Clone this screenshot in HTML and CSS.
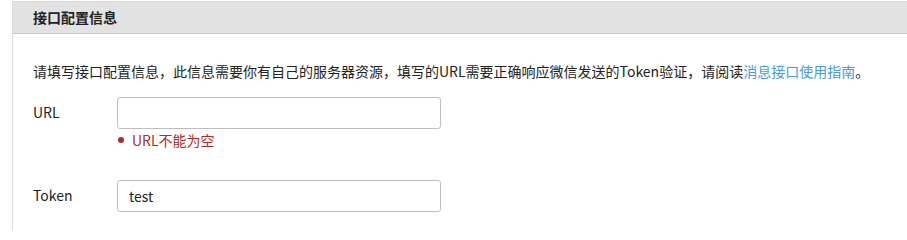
FILE: index.html
```html
<!DOCTYPE html>
<html lang="zh-CN">
<head>
<meta charset="utf-8">
<title>接口配置信息</title>
<link rel="stylesheet" href="styles.css">
</head>
<body>
<div class="panel">
  <div class="panel-head">接口配置信息</div>
  <div class="panel-body">
    <p class="desc">请填写接口配置信息，此信息需要你有自己的服务器资源，填写的URL需要正确响应微信发送的Token验证，请阅读<a href="#" class="link">消息接口使用指南</a>。</p>
    <div class="row">
      <label class="label">URL</label>
      <div class="field">
        <input class="input" type="text" value="">
        <div class="error"><span class="dot"></span>URL不能为空</div>
      </div>
    </div>
    <div class="row row-token">
      <label class="label">Token</label>
      <div class="field">
        <input class="input" type="text" value="test">
      </div>
    </div>
  </div>
</div>
</body>
</html>
```
FILE: styles.css
```css
html, body {
  margin: 0;
  padding: 0;
  background: #fff;
}
body {
  font-family: "Noto Sans CJK SC", "Noto Sans", sans-serif;
  font-size: 14px;
  color: #222;
  height: 231px;
  overflow: hidden;
}
.panel {
  margin: 1px 0 0 12px;
  border-top: 1px solid #dcdcdc;
  border-left: 1px solid #dcdcdc;
  min-height: 240px;
}
.panel-head {
  background: #e2e2e2;
  border-bottom: 1px solid #cacaca;
  height: 31px;
  line-height: 31px;
  padding-left: 20px;
  font-weight: bold;
  color: #222;
}
.panel-body {
  padding: 27px 0 0 20px;
}
.desc {
  margin: 0;
  line-height: 20px;
}
.link {
  color: #459ae9;
  text-decoration: none;
}
.row {
  display: flex;
  margin-top: 16px;
}
.row-token {
  margin-top: 30px;
}
.label {
  width: 84px;
  line-height: 30px;
  flex: none;
}
.field {
  display: flex;
  flex-direction: column;
}
.input {
  box-sizing: border-box;
  width: 324px;
  height: 32px;
  border: 1px solid #bdbdbd;
  border-radius: 3px;
  padding: 0 11px;
  margin: 0;
  font-family: "Noto Sans CJK SC", "Noto Sans", sans-serif;
  font-size: 14px;
  color: #222;
  outline: none;
}
.error {
  display: flex;
  align-items: center;
  line-height: 20px;
  height: 21px;
  color: #b02a2a;
}
.dot {
  width: 6px;
  height: 6px;
  border-radius: 50%;
  background: #b02a2a;
  margin: 0 8px 0 1px;
}
```
